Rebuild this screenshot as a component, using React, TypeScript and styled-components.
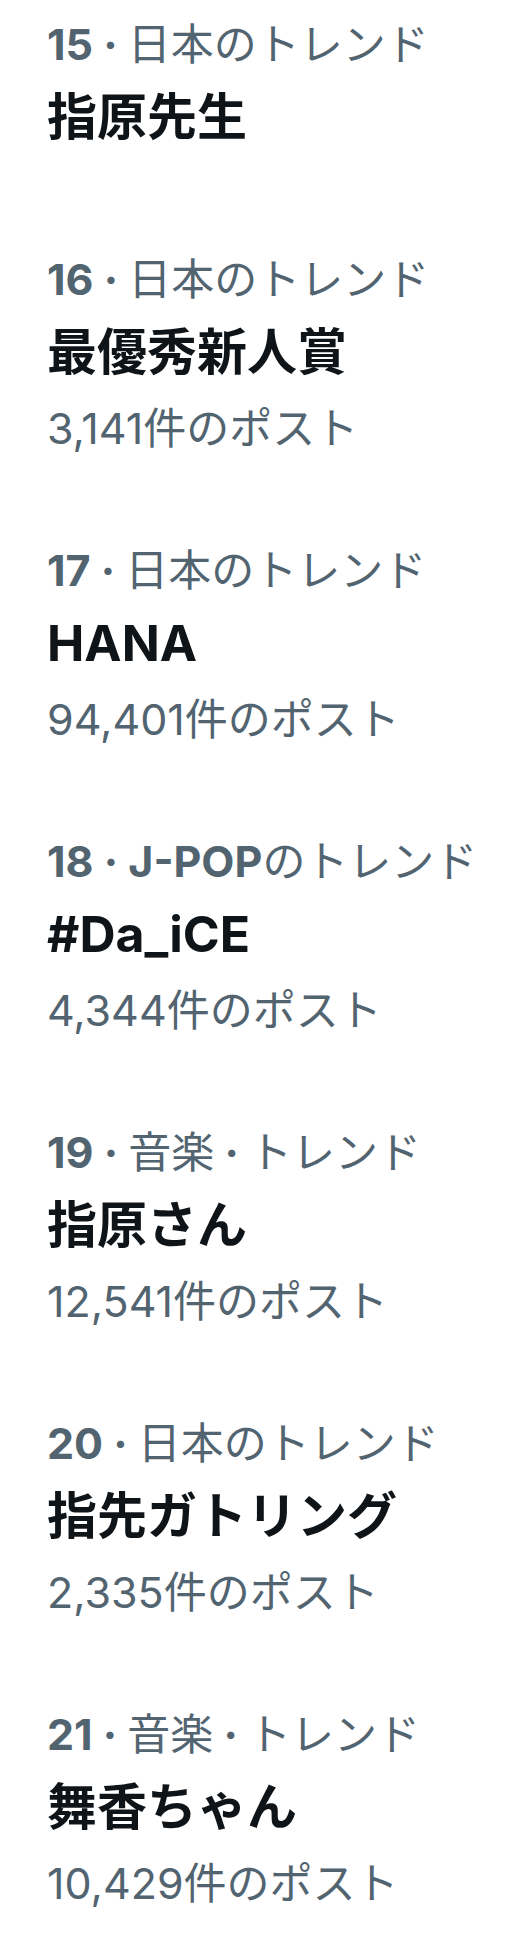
import React from 'react';
import styled, { createGlobalStyle } from 'styled-components';

const GlobalStyle = createGlobalStyle`
  html, body {
    margin: 0;
    padding: 0;
    background: #ffffff;
  }

  body {
    font-family: "Inter", "Noto Sans CJK JP", sans-serif;
    font-variant-numeric: proportional-nums;
    -webkit-font-smoothing: antialiased;
  }
`;

type Part = string | { latin: string };

interface Trend {
  rank: number;
  context: Part[];
  name: string;
  posts?: string;
}

const trends: Trend[] = [
  { rank: 15, context: ['日本のトレンド'], name: '指原先生' },
  { rank: 16, context: ['日本のトレンド'], name: '最優秀新人賞', posts: '3,141' },
  { rank: 17, context: ['日本のトレンド'], name: 'HANA', posts: '94,401' },
  { rank: 18, context: [{ latin: 'J-POP' }, 'のトレンド'], name: '#Da_iCE', posts: '4,344' },
  { rank: 19, context: ['音楽', { latin: ' · ' }, 'トレンド'], name: '指原さん', posts: '12,541' },
  { rank: 20, context: ['日本のトレンド'], name: '指先ガトリング', posts: '2,335' },
  { rank: 21, context: ['音楽', { latin: ' · ' }, 'トレンド'], name: '舞香ちゃん', posts: '10,429' }
];

const List = styled.section`
  display: flex;
  flex-direction: column;
  width: 506px;
`;

const Item = styled.article`
  display: flex;
  flex-direction: column;
  padding: 42px 20px 40px 47px;

  &:first-child {
    padding-top: 14px;
    padding-bottom: 52px;
  }
`;

const Context = styled.div`
  font-size: 43px;
  line-height: 60px;
  font-weight: 400;
  color: #536471;
  white-space: nowrap;
`;

const Latin = styled.span`
  font-family: "Inter", sans-serif;
  font-weight: 700;
`;

const Name = styled.div`
  margin-top: 5px;
  font-size: 50px;
  line-height: 76px;
  font-weight: 700;
  color: #0f1419;
  white-space: nowrap;
`;

const Posts = styled.div`
  margin-top: 8px;
  font-size: 43px;
  line-height: 60px;
  font-weight: 400;
  color: #536471;
  white-space: nowrap;
`;

function TrendItem ({ trend }: { trend: Trend }): React.ReactElement {
  return (
    <Item>
      <Context>
        <Latin>{trend.rank} · </Latin>
        {trend.context.map((part, i) =>
          typeof part === 'string'
            ? <span key={i}>{part}</span>
            : <Latin key={i}>{part.latin}</Latin>
        )}
      </Context>
      <Name>{trend.name}</Name>
      {trend.posts && <Posts>{trend.posts}件のポスト</Posts>}
    </Item>
  );
}

export default function App (): React.ReactElement {
  return (
    <>
      <GlobalStyle />
      <List>
        {trends.map((t) => <TrendItem key={t.rank} trend={t} />)}
      </List>
    </>
  );
}
